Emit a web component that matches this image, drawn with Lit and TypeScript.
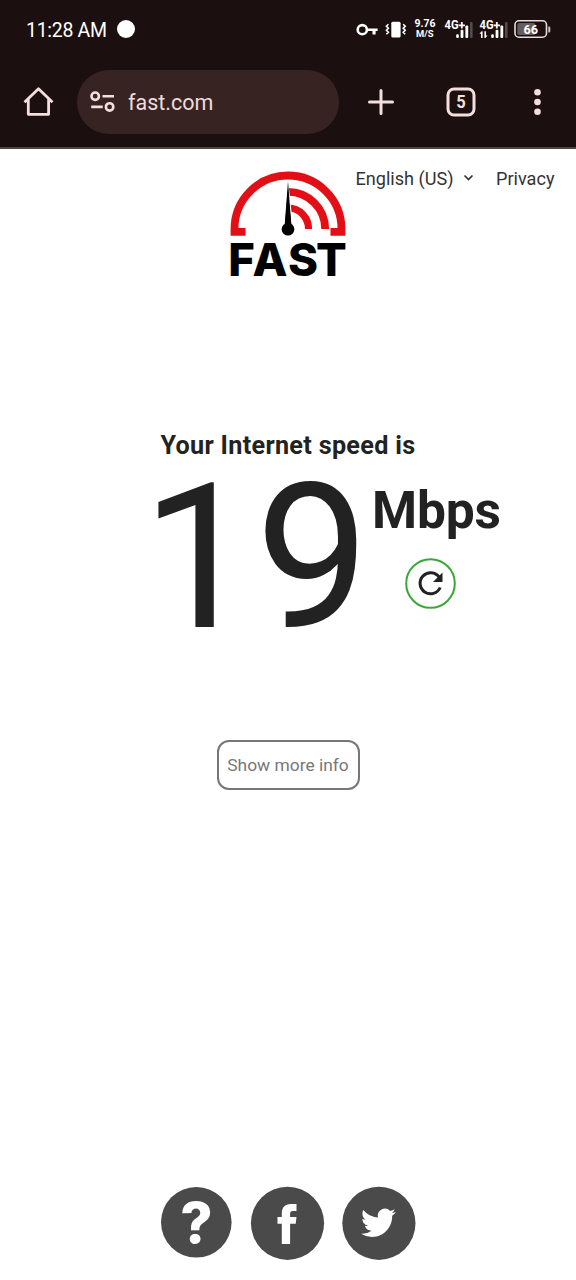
import { LitElement, html, css, svg } from "lit";
import { customElement } from "lit/decorators.js";

@customElement("status-bar")
class StatusBar extends LitElement {
  static styles = css`
    :host { display: flex; align-items: center; height: 60px; padding: 0 25px 0 26px; color: #fff; box-sizing: border-box; }
    .time { font-size: 19.5px; letter-spacing: -.3px; line-height: 24px; white-space: pre; width: 91px; padding-top: 1px; }
    .dot { width: 18px; height: 18px; border-radius: 50%; background: #fff; margin-bottom: 2px; }
    .icons { display: flex; margin-left: auto; height: 24px; margin-bottom: 1px; }
    svg { display: block; height: 24px; fill: #fff; font-family: Roboto, sans-serif; font-weight: 700; }
  `;
  signal(arrows: boolean) {
    return svg`<svg width="35" viewBox="0 0 35 24">
      <text x="6.5" y="10.8" font-size="12" textLength="14" lengthAdjust="spacingAndGlyphs">4G</text>
      <path d="M20.6 6.4h2.3V4.1h1.8v2.3H27v1.8h-2.3v2.3h-1.8V8.2h-2.3z"/>
      ${arrows ? svg`<path d="M8.6 13.3h1V20H8v-4.3H6.4zM11.4 13.3H13v4.2h1.6L12.400 20h-1z"/>` : ""}
      <rect x="18.2" y="16.300" width="2.6" height="3.700" rx="1"/>
      <rect x="22.6" y="11.8" width="2.8" height="8.2" rx="1"/>
      <rect x="27.4" y="7.5" width="2.8" height="12.5" rx="1"/>
      <rect x="32" y="4" width="2.6" height="16" rx="1" opacity=".25"/>
    </svg>`;
  }
  render() {
    return html`
      <span class="time">11:28 AM</span><span class="dot"></span>
      <div class="icons">
        <svg width="28" viewBox="1 0 28 24"><circle cx="9.3" cy="11.7" r="4.6" fill="none" stroke="#fff" stroke-width="2.6"/><path d="M13 10.4h11.6v2.7h-2v3.5h-3.1v-3.5H13z"/></svg>
        <svg width="29" viewBox="29 0 29 24"><rect x="38.3" y="3.7" width="9.3" height="15.8" rx="1.5"/><path d="M35.4 6.2l-2 2 2 2-2 2 2 2-2 2M50.2 6.2l2 2-2 2 2 2-2 2 2 2" fill="none" stroke="#fff" stroke-width="1.6"/></svg>
        <svg width="27" viewBox="58 0 27 24"><text x="61.6" y="9.3" font-size="10.8" textLength="21" lengthAdjust="spacingAndGlyphs">9.76</text><text x="63" y="19.2" font-size="9.2" textLength="17.5" lengthAdjust="spacingAndGlyphs">M/S</text></svg>
        <span>${this.signal(false)}</span><span>${this.signal(true)}</span>
        <svg width="43" viewBox="158 0 43 24"><rect x="165" y="2.8" width="31.5" height="16.4" rx="4" fill="none" stroke="#e8dcdc" stroke-width="1.6"/><rect x="167.3" y="5" width="18" height="12" rx="2" fill="#665c5c"/><path d="M198.3 8.5h.7a1.3 1.3 0 011.3 1.3v3.4a1.3 1.3 0 01-1.3 1.3h-.7z" fill="#cfc4c4"/><text x="173.5" y="15.6" font-size="13" textLength="14.5" lengthAdjust="spacingAndGlyphs">66</text></svg>
      </div>`;
  }
}

@customElement("browser-bar")
class BrowserBar extends LitElement {
  static styles = css`
    :host { display: flex; align-items: center; height: 89px; box-sizing: border-box; padding: 0 27px 2.5px 22px; border-bottom: 2px solid #51443f; color: #f3dfde; }
    svg { display: block; flex: none; fill: none; stroke: #f3dfde; stroke-width: 3; }
    .address { display: flex; align-items: center; width: 262px; height: 64px; border-radius: 32px; background: #382323; margin: 0 27px 0 22px; box-sizing: border-box; padding-left: 13px; }
    .url { font-size: 21.5px; line-height: 28px; margin: 2px 0 0 13px; color: #eddcdc; }
    .tabs { margin-left: 50px; }
    .tabs text { fill: #f3dfde; stroke: none; font: 700 18px Roboto, sans-serif; }
    .more { margin-left: auto; fill: #f3dfde; stroke: none; }
  `;
  render() {
    return html`
      <svg width="33" height="34" viewBox="0 0 33 34"><path d="M2.5 17.3L16.5 3.7l14 13.6M6.3 14v15.3h20.300V14" stroke-width="2.8" stroke-linejoin="round"/></svg>
      <div class="address">
        <svg width="25" height="22" viewBox="0 0 25 22" stroke-width="2.4"><g stroke-width="2.600"><circle cx="5.2" cy="5.2" r="3.7"/><path d="M12.5 5.2H24M1.2 15.9h11.5"/><circle cx="19.6" cy="15.9" r="3.7"/></g></svg>
        <span class="url">fast.com</span>
      </div>
      <svg width="30" height="30" viewBox="0 0 30 30"><path d="M15 3.5v23M3.5 15h23" stroke-linecap="round"/></svg>
      <svg class="tabs" width="30" height="30" viewBox="0 0 30 30"><rect x="2" y="2" width="26" height="26" rx="6"/><text x="10.3" y="21.3" textLength="9.5" lengthAdjust="spacingAndGlyphs">5</text></svg>
      <svg class="more" width="22" height="30" viewBox="0 0 22 30"><circle cx="10.5" cy="5.3" r="3.3"/><circle cx="10.5" cy="15" r="3.3"/><circle cx="10.5" cy="24.7" r="3.3"/></svg>`;
  }
}

@customElement("speed-page")
class SpeedPage extends LitElement {
  static styles = css`
    :host { display: flex; flex-direction: column; flex: 1; color: #222; }
    svg { display: block; flex: none; overflow: visible; }
    .head { display: flex; height: 133px; padding: 18px 0 0 226px; box-sizing: border-box; }
    .wordmark { font: 800 45.5px Inter, sans-serif; }
    .links { display: flex; font-size: 18.1px; line-height: 24px; white-space: nowrap; color: #333; margin: 0 0 0 5.5px; }
    .language { width: 99.5px; }
    .chevron { margin: 5px 0 0 8px; }
    .privacy { margin-left: 22px; }
    .title { font-size: 25.2px; letter-spacing: .3px; font-weight: 700; line-height: 32px; margin: 148px 0 0 160.5px; white-space: nowrap; }
    .result { display: flex; height: 180px; padding-left: 141.5px; }
    .value { font-size: 203px; line-height: 180px; padding-top: 6px; width: 230.5px; height: 180px; box-sizing: border-box; }
    .side { display: flex; flex-direction: column; align-items: flex-start; }
    .unit { font-size: 51.5px; font-weight: 700; line-height: 60px; margin-top: 19px; letter-spacing: -.2px; }
    .reload { margin: 15px 0 0 31px; }
    .info { align-self: center; width: 143px; height: 50px; margin-top: 98px; border: 2px solid #777; border-radius: 12px; background: #fff; color: #777; font: 17.4px Roboto, sans-serif; padding: 0; white-space: nowrap; }
    .social { display: flex; align-items: center; margin: auto 0 20px 160px; gap: 18px; }
    .mark { font: 800 56px Inter, sans-serif; }
  `;
  render() {
    return html`
      <header class="head">
        <svg width="124" height="115" viewBox="226 167 124 115">
          <g fill="none" stroke="#e20f17">
            <path d="M245.5 231.8H234.500v-2.800a53.500 53.500 0 01107 0v2.800h-11" stroke-width="7.8"/>
            <path d="M288 191.8a37.2 37.2 0 0137.2 37.200" stroke-width="7.8"/>
            <path d="M288 208a20.5 20.5 0 0120.5 21" stroke-width="7.2"/>
          </g>
          <path d="M287.6 182.5L284 228h8.5z" stroke="#fff" stroke-width="1.5"/>
          <path d="M288 181l3.6 48h-7.2z"/>
          <circle cx="288" cy="229.3" r="6.3"/>
          <text class="wordmark" x="228.300 252.500 288 316" y="276.300">FAST</text>
        </svg>
        <nav class="links">
          <span class="language">English (US)</span>
          <svg class="chevron" width="11" height="11" viewBox="0 0 11 11"><path d="M1.5 3.5l4 4 4-4" fill="none" stroke="#333" stroke-width="1.7"/></svg>
          <span class="privacy">Privacy</span>
        </nav>
      </header>
      <div class="title">Your Internet speed is</div>
      <div class="result">
        <div class="value">19</div>
        <div class="side">
          <div class="unit">Mbps</div>
          <svg class="reload" width="54" height="54" viewBox="0 0 54 54"><circle cx="27.5" cy="27.5" r="24.3" fill="none" stroke="#38a838" stroke-width="2"/><path d="M36.2 21.200a10.500 10.500 0 101 10.300" fill="none" stroke="#222" stroke-width="3"/><path d="M39.500 16.500v9.500H30z" fill="#222"/></svg>
        </div>
      </div>
      <button class="info">Show more info</button>
      <footer class="social">
        <svg width="72" height="74" viewBox="160 1186 72 74"><circle cx="196.3" cy="1222.3" r="35.3" fill="#4a4a4a"/><text class="mark" x="196.5" y="1242.8" text-anchor="middle" fill="#fff">?</text></svg>
        <svg width="74" height="74" viewBox="250.5 1186 74 74"><circle cx="288" cy="1223.3" r="36.6" fill="#4a4a4a"/><path fill="#fff" d="M282.3 1244v-20.2H278v-6.8h4.3v-3.5c0-6 3.2-9.5 9-9.5h5.7v7h-3.6c-2 0-2.8.9-2.8 2.7v3.3h6.4l-.8 6.8h-5.6V1244z"/></svg>
        <svg width="74" height="74" viewBox="342.5 1186 74 74"><circle cx="379.4" cy="1223.3" r="36.6" fill="#4a4a4a"/><path fill="#fff" transform="translate(361.5 1205.5) scale(1.445)" d="M23.953 4.57a10 10 0 01-2.825.775 4.958 4.958 0 002.163-2.723c-.951.555-2.005.959-3.127 1.184a4.92 4.92 0 00-8.384 4.482C7.69 8.095 4.067 6.13 1.64 3.162a4.822 4.822 0 00-.666 2.475c0 1.71.87 3.213 2.188 4.096a4.904 4.904 0 01-2.228-.616v.06a4.923 4.923 0 003.946 4.827 4.996 4.996 0 01-2.212.085 4.936 4.936 0 004.604 3.417 9.867 9.867 0 01-6.102 2.105c-.39 0-.779-.023-1.17-.067a13.995 13.995 0 007.557 2.209c9.053 0 13.998-7.496 13.998-13.985 0-.21 0-.42-.015-.63A9.935 9.935 0 0024 4.59z"/></svg>
      </footer>`;
  }
}

@customElement("app-root")
class AppRoot extends LitElement {
  static styles = css`
    :host { display: flex; flex-direction: column; width: 576px; height: 1280px; background: #fff; font-family: Roboto, sans-serif; overflow: hidden; }
    .chrome { background: #1c0f0f; }
  `;
  render() {
    return html`<div class="chrome"><status-bar></status-bar><browser-bar></browser-bar></div><speed-page></speed-page>`;
  }
}
